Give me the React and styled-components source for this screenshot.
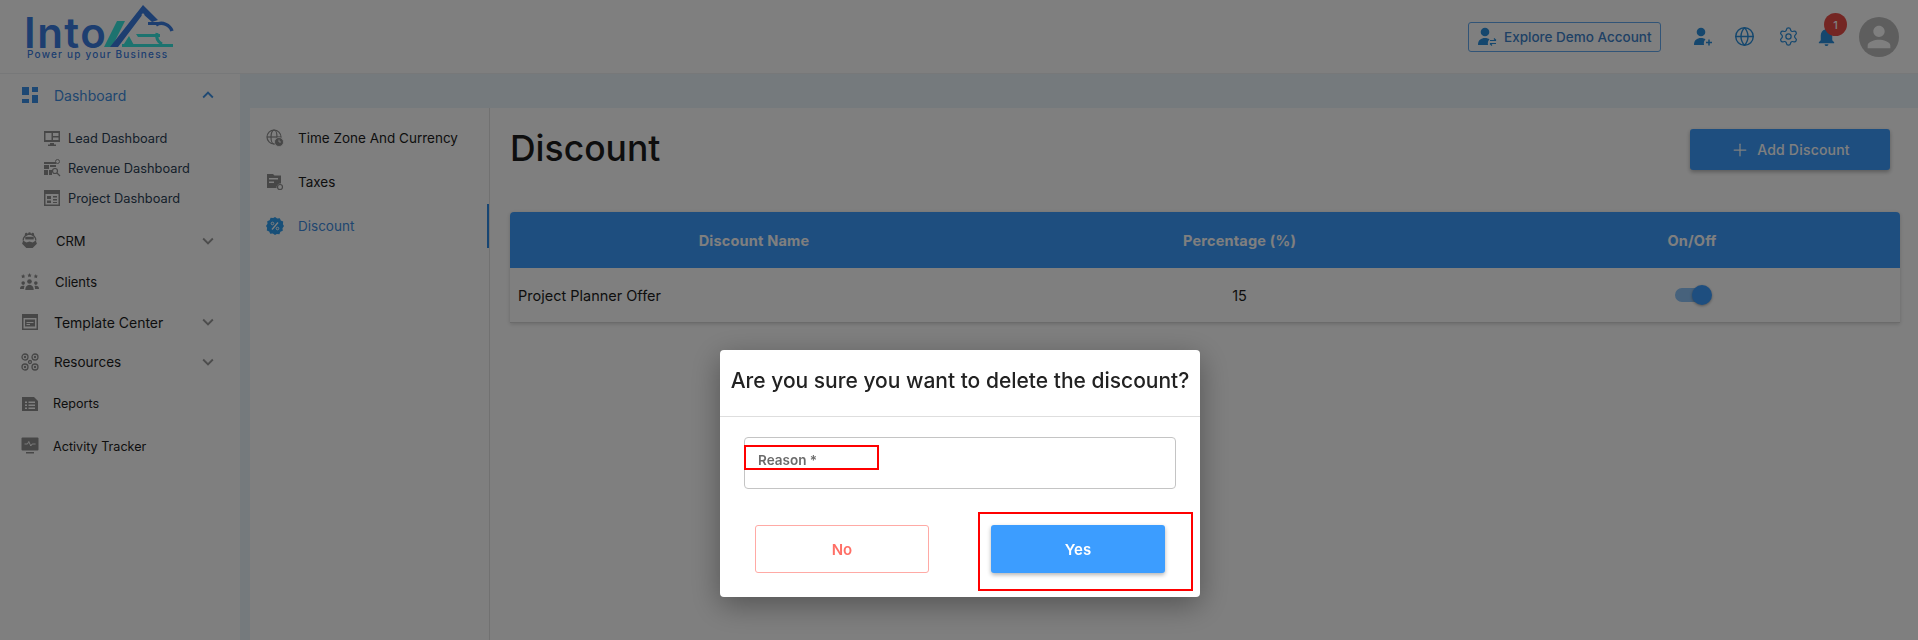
import React from "react";
import styled, { createGlobalStyle } from "styled-components";
import { MdKeyboardArrowDown, MdKeyboardArrowUp, MdPerson, MdNotifications } from "react-icons/md";
import { Globe, Settings, Plus } from "lucide-react";

const GlobalStyle = createGlobalStyle`
  * { box-sizing: border-box; }
  html, body { margin: 0; height: 100%; }
  body {
    font-family: "Inter", "Open Sans", sans-serif;
    color: #1d1d1d;
    background: #fff;
    overflow: hidden;
  }
`;

const Page = styled.div`
  width: 1918px;
  height: 640px;
  display: flex;
  flex-direction: column;
  overflow: hidden;
`;

const Header = styled.header`
  height: 74px;
  flex: none;
  display: flex;
  align-items: center;
  padding: 0 19px 0 27px;
  border-bottom: 1px solid #eef0f2;
`;

const Logo = styled.div`
  position: relative;
  align-self: flex-start;
  margin-top: 4px;
  width: 150px;
  height: 60px;
`;

const LogoWord = styled.span`
  position: absolute;
  left: -3px;
  top: 14px;
  font-size: 42px;
  line-height: 30px;
  font-weight: 600;
  letter-spacing: 1.5px;
  color: #3a7ce0;
`;

const LogoSlogan = styled.span`
  position: absolute;
  left: 0;
  top: 45px;
  font-size: 10px;
  line-height: 11px;
  font-weight: 500;
  letter-spacing: 1.2px;
  white-space: nowrap;
  color: #3a7ce0;
`;

const LogoMark = styled.svg`
  position: absolute;
  left: 77px;
  top: 1px;
`;

const HeaderRight = styled.div`
  margin-left: auto;
  display: flex;
  align-items: center;
`;

const DemoButton = styled.div`
  width: 193px;
  height: 30px;
  display: flex;
  align-items: center;
  gap: 7px;
  padding-left: 8px;
  border: 1px solid #62a9ee;
  border-radius: 3px;
  color: #3c82cb;
  font-size: 13.5px;
  font-weight: 500;
  white-space: nowrap;
  margin-right: 31px;
`;

const HeaderIcon = styled.span`
  display: flex;
  width: ${(p) => p.$w}px;
  justify-content: center;
  color: #2a8fdc;
`;

const Bell = styled(HeaderIcon)`
  position: relative;
`;

const Badge = styled.span`
  position: absolute;
  left: 22px;
  top: -12px;
  width: 23px;
  height: 23px;
  border-radius: 50%;
  background: #e84c47;
  color: #fff;
  font-size: 11px;
  font-weight: 500;
  display: flex;
  align-items: center;
  justify-content: center;
`;

const Avatar = styled.div`
  width: 40px;
  height: 40px;
  border-radius: 50%;
  background: #bdbdbd;
  color: #fff;
  display: flex;
  align-items: center;
  justify-content: center;
  margin-left: 9px;
`;

const Body = styled.div`
  flex: 1;
  display: flex;
  min-height: 0;
`;

const Sidebar = styled.nav`
  width: 240px;
  flex: none;
`;

const NavRow = styled.div`
  height: ${(p) => p.$h}px;
  display: flex;
  align-items: center;
  padding-left: 20px;
  padding-right: 21px;
  font-size: ${(p) => p.$fs || 14}px;
  color: ${(p) => (p.$active ? "#3f8de0" : "#1c1c1c")};
`;

const NavIcon = styled.span`
  width: 19px;
  display: flex;
  justify-content: center;
  margin-right: ${(p) => p.$gap}px;
`;

const Chevron = styled.span`
  margin-left: auto;
  display: flex;
  color: ${(p) => (p.$active ? "#3f93e6" : "#9a9a9a")};
`;

const SubList = styled.div`
  padding: 7px 0 7px 43px;
`;

const SubRow = styled.div`
  height: 30px;
  display: flex;
  align-items: center;
  gap: 7px;
  font-size: 12.8px;
  color: #2b3f55;
`;

const Main = styled.main`
  flex: 1;
  display: flex;
  flex-direction: column;
  background: #eaf5fb;
  padding-top: 34px;
  padding-left: 10px;
`;

const Card = styled.div`
  flex: 1;
  display: flex;
  background: #fff;
`;

const SettingsNav = styled.div`
  width: 240px;
  flex: none;
  border-right: 1px solid #e3e3e3;
  padding-top: 8px;
`;

const SettingsRow = styled.div`
  position: relative;
  height: 44px;
  display: flex;
  align-items: center;
  gap: 14px;
  padding-left: 16px;
  font-size: 13.5px;
  color: ${(p) => (p.$active ? "#3f8de0" : "#1c1c1c")};

  ${(p) =>
    p.$active &&
    `&::after {
      content: "";
      position: absolute;
      right: 0;
      top: 0;
      width: 2px;
      height: 44px;
      background: #2d8ae6;
    }`}
`;

const Content = styled.div`
  flex: 1;
  padding: 21px 18px 0 20px;
`;

const TitleRow = styled.div`
  display: flex;
  align-items: flex-start;
  justify-content: space-between;
  height: 83px;
  padding-right: 10px;
`;

const Title = styled.h1`
  margin: 0;
  font-size: 35.5px;
  line-height: 40px;
  font-weight: 500;
  color: #1c1c1c;
`;

const AddButton = styled.div`
  width: 200px;
  height: 41px;
  border-radius: 3px;
  background: #3c9dff;
  box-shadow: 0 2px 4px rgba(0, 0, 0, 0.3);
  color: #fff;
  display: flex;
  align-items: center;
  justify-content: center;
  gap: 7px;
  font-size: 14px;
  font-weight: 500;
  letter-spacing: 0.2px;
`;

const Table = styled.div`
  border-radius: 4px 4px 0 0;
  box-shadow: 0 1px 4px rgba(0, 0, 0, 0.18);
`;

const TableHead = styled.div`
  height: 56px;
  display: grid;
  grid-template-columns: 488px 483px 1fr;
  align-items: center;
  background: #3c9dff;
  border-radius: 4px 4px 0 0;
  color: #fff;
  font-size: 14.5px;
  font-weight: 700;
  letter-spacing: 0.2px;
  text-align: center;
`;

const TableRow = styled.div`
  height: 55px;
  display: grid;
  grid-template-columns: 488px 483px 1fr;
  align-items: center;
  font-size: 14.5px;
  border-bottom: 1px solid #d6d6d6;
`;

const NameCell = styled.div`
  padding-left: 8px;
`;

const CenterCell = styled.div`
  display: flex;
  justify-content: center;
`;

const LastHeadCell = styled.div`
  padding-left: 3px;
`;

const LastCell = styled(CenterCell)`
  padding-left: 3px;
`;

const SwitchTrack = styled.div`
  position: relative;
  width: 34px;
  height: 14px;
  border-radius: 7px;
  background: #8ec4f8;
`;

const SwitchThumb = styled.div`
  position: absolute;
  right: -3px;
  top: -3px;
  width: 20px;
  height: 20px;
  border-radius: 50%;
  background: #3c9dff;
  box-shadow: 0 1px 3px rgba(0, 0, 0, 0.35);
`;

const Backdrop = styled.div`
  position: fixed;
  inset: 0;
  background: rgba(0, 0, 0, 0.5);
  display: flex;
  align-items: flex-start;
  justify-content: center;
  padding: 350px 0 0 2px;
`;

const Dialog = styled.div`
  width: 480px;
  height: 247px;
  background: #fff;
  border-radius: 4px;
  box-shadow: 0 8px 30px rgba(0, 0, 0, 0.35);
`;

const DialogTitle = styled.div`
  height: 67px;
  padding-bottom: 6px;
  display: flex;
  align-items: center;
  justify-content: center;
  border-bottom: 1px solid #dedede;
  font-size: 21px;
  font-weight: 500;
  color: #222;
  white-space: nowrap;
`;

const DialogBody = styled.div`
  padding: 20px 24px 0;
`;

const ReasonField = styled.div`
  position: relative;
  height: 52px;
  border: 1px solid #c4c4c4;
  border-radius: 4px;
`;

const ReasonLabel = styled.span`
  position: absolute;
  left: 13px;
  top: 14px;
  font-size: 13.5px;
  line-height: 16px;
  font-weight: 600;
  color: #6b6b6b;
`;

const Highlight = styled.div`
  position: absolute;
  border: 2px solid #ff0000;
  pointer-events: none;
`;

const LabelHighlight = styled(Highlight)`
  left: -1px;
  top: 7px;
  width: 135px;
  height: 25px;
`;

const Actions = styled.div`
  position: relative;
  display: flex;
  justify-content: space-between;
  padding: 36px 11px 0;
`;

const ActionButton = styled.div`
  width: 174px;
  height: 48px;
  border-radius: 3px;
  display: flex;
  align-items: center;
  justify-content: center;
  font-size: 15px;
  font-weight: 600;
  color: ${(p) => (p.$primary ? "#fff" : "#ff6f66")};
  background: ${(p) => (p.$primary ? "#3c9dff" : "#fff")};
  border: ${(p) => (p.$primary ? "none" : "1px solid #ffaaa5")};
  box-shadow: ${(p) => (p.$primary ? "0 2px 4px rgba(0,0,0,.3)" : "none")};
`;

const YesHighlight = styled(Highlight)`
  right: -17px;
  top: 23px;
  width: 215px;
  height: 79px;
`;

// the app's own icons, redrawn by hand
const GREY = "#8e8e8e";

const Glyph = ({ size = 18, children }) => (
  <svg width={size} height={size} viewBox="0 0 18 18" fill={GREY}>
    {children}
  </svg>
);

const DashboardGlyph = () => (
  <svg width="16" height="16" viewBox="0 0 16 16" fill="#3a90e8">
    <rect x="0" y="0" width="7" height="8" />
    <rect x="10" y="0" width="6" height="5" />
    <rect x="0" y="12" width="7" height="4" />
    <rect x="10" y="8" width="6" height="8" />
  </svg>
);

const LeadGlyph = () => (
  <Glyph>
    <path d="M1 2h16v11H1zM2.500 4v7h6V4zM10 4v3h5.500V4zM10 8.500V11h5.500V8.500z" fillRule="evenodd" />
    <path d="M7 14h4v1.500h2V17H5v-1.500h2z" />
  </Glyph>
);

const RevenueGlyph = () => (
  <Glyph>
    <path d="M1 3h12v2H1zM1 6h5v4H1zM7 6h6v2H7zM1 11h4v5H1zM6 11h3v5H6z" />
    <circle cx="14.500" cy="2.500" r="2" fill="none" stroke={GREY} />
    <circle cx="12" cy="12" r="2.500" fill="none" stroke={GREY} strokeWidth="1.200" />
    <path d="M14 14l3 3" stroke={GREY} strokeWidth="1.300" />
  </Glyph>
);

const ProjectGlyph = () => (
  <Glyph>
    <path d="M1 1h16v16H1zM2.500 5v10.500h13V5z" fillRule="evenodd" />
    <path d="M4 7h4v3H4zM10 7h4v1.500h-4zM10 10h4v1.500h-4zM4 11.500h4V14H4zM10 13h4v1h-4z" />
  </Glyph>
);

const CrmGlyph = () => (
  <Glyph size={19}>
    <path d="M3 9a6 6 0 0 1 12 0" fill="none" stroke={GREY} strokeWidth="1.200" />
    <circle cx="6" cy="3" r="1.300" />
    <circle cx="9" cy="2.500" r="1.300" />
    <circle cx="12" cy="3" r="1.300" />
    <path d="M5 5.500h8V8H5z" />
    <path d="M3 9l3 2 3-1 3 1 3-2 1 3-4 4H6l-4-4z" />
  </Glyph>
);

const Star = ({ x, y }) => (
  <path transform={`translate(${x} ${y})`} d="M0-2l.6 1.400 1.400.1-1 1 .3 1.500L0 1.200-1.300 2-1 .5l-1-1 1.400-.1z" />
);

const ClientsGlyph = () => (
  <Glyph size={19}>
    <Star x={3} y={4} />
    <Star x={9} y={3} />
    <Star x={15} y={4} />
    <circle cx="9" cy="9" r="2.200" />
    <circle cx="3" cy="10.500" r="1.700" />
    <circle cx="15" cy="10.500" r="1.700" />
    <path d="M5 17c0-3 1.500-5 4-5s4 2 4 5zM0 16c0-2 1-3 3-3 .5 0 1 .1 1.300.3C4 14 3.700 15 3.700 16zM18 16c0-2-1-3-3-3-.5 0-1 .1-1.300.3.3.7.6 1.700.6 2.700z" />
  </Glyph>
);

const TemplateGlyph = () => (
  <Glyph>
    <path d="M1 1h16v16H1zM2.500 5v10.500h13V5z" fillRule="evenodd" />
    <path d="M4 6.500h10v7H4zM5.500 9v1h7V9zM5.500 11v1H9v-1z" fillRule="evenodd" />
  </Glyph>
);

const ResourcesGlyph = () => (
  <Glyph>
    <g fill="none" stroke={GREY} strokeWidth="1.300">
      <circle cx="4" cy="4" r="3" />
      <circle cx="14" cy="4" r="3" />
      <circle cx="4" cy="14" r="3" />
      <circle cx="14" cy="14" r="3" />
      <circle cx="9" cy="9" r="1.500" />
    </g>
    <circle cx="4" cy="4" r="1.200" />
    <circle cx="14" cy="4" r="1.200" />
    <circle cx="4" cy="14" r="1.200" />
    <circle cx="14" cy="14" r="1.200" />
  </Glyph>
);

const ReportsGlyph = () => (
  <Glyph>
    <path
      d="M1 2h12l4 4v10H1zM4 6.500v1.500h2V6.500zM7.500 6.500v1.500H14V6.500zM4 9.500v1.500h2V9.500zM7.500 9.500v1.500H14V9.500zM4 12.500V14h2v-1.500zM7.500 12.500V14H14v-1.500z"
      fillRule="evenodd"
    />
  </Glyph>
);

const ActivityGlyph = () => (
  <Glyph>
    <rect x="0.500" y="0.500" width="17" height="13" rx="1" />
    <path d="M3.500 7h3l1.300-2.500 2 4.500 1.300-2h3.500" fill="none" stroke="#fff" strokeWidth="0.900" />
    <rect x="5" y="15" width="8" height="1.500" />
  </Glyph>
);

const TimeZoneGlyph = () => (
  <Glyph>
    <g fill="none" stroke={GREY} strokeWidth="1.200">
      <circle cx="8" cy="8" r="7" />
      <ellipse cx="8" cy="8" rx="3" ry="7" />
      <path d="M1 8h14" />
    </g>
    <circle cx="13" cy="13" r="4.500" stroke="#fff" strokeWidth="0.800" />
    <path d="M13 10.500V13h2" fill="none" stroke="#fff" strokeWidth="0.900" />
  </Glyph>
);

const TaxesGlyph = () => (
  <Glyph>
    <path d="M1 1h6l1.500 1.500H15V10.500a4 4 0 0 0-4.500 4.500H1zM3 5v1.500h9V5zM3 8.500V10h5V8.500z" fillRule="evenodd" />
    <circle cx="14" cy="14" r="2.500" fill="none" stroke={GREY} strokeWidth="1.200" />
  </Glyph>
);

const DiscountGlyph = () => (
  <svg width="18" height="18" viewBox="0 0 18 18">
    <path
      fill="#2f9ff0"
      d="M9 0l2.200 1.500 2.600-.3 1 2.400 2.400 1-.3 2.600L18 9l-1.500 2.200.3 2.600-2.400 1-1 2.400-2.600-.3L9 18l-2.200-1.500-2.600.3-1-2.400-2.400-1 .3-2.600L0 9l1.500-2.200-.3-2.600 2.400-1 1-2.400 2.600.3z"
    />
    <path stroke="#fff" strokeWidth="1.300" d="M12 5.500l-6 7" />
    <circle cx="6.500" cy="6.500" r="1.300" fill="none" stroke="#fff" />
    <circle cx="11.500" cy="11.500" r="1.300" fill="none" stroke="#fff" />
  </svg>
);

const UserGlyph = ({ color = "#2a8fdc", swap }) => (
  <svg width="20" height="20" viewBox="0 0 20 20" fill={color}>
    <circle cx="8" cy="5" r="4.300" />
    <path d="M1 18c0-5 3-7 7-7 2 0 3.500.5 4.500 1.500-1.500 1-2 3-1.500 5.500z" />
    {swap ? (
      <path stroke={color} strokeWidth="1.200" fill="none" d="M13 13.500h6M17 11.500l2 2M19 16.500h-6M15 18.500l-2-2" />
    ) : (
      <path stroke={color} strokeWidth="1.500" fill="none" d="M16 12.500v6M13 15.500h6" />
    )}
  </svg>
);

const BLUE = "#3a7ce0";
const TEAL = "#38e6de";

const App = () => {
  return (
    <>
      <GlobalStyle />
      <Page>
        <Header>
          <Logo>
            <LogoWord>Into</LogoWord>
            <LogoMark width="72" height="46" viewBox="0 0 72 46">
              <path fill={TEAL} d="M0 42L13 16h8L8 42z" />
              <path fill={TEAL} d="M18 42l7-11 6 11z" />
              <path fill={BLUE} d="M6 42L39 0l15 15-6 2-9-8-25 33z" />
              <circle cx="39" cy="10" r="1.400" fill="#fff" />
              <rect x="44" y="17" width="12" height="3" fill={BLUE} />
              <path fill={TEAL} d="M32 29h24v3H34z" />
              <path fill={TEAL} d="M18 39h51v3H18z" />
              <path fill="none" stroke={BLUE} strokeWidth="3.500" d="M68 26c-2-6-10-10-16-6" />
              <path fill="none" stroke={TEAL} strokeWidth="3" d="M53 28c-1 5 1 9 5 11" />
            </LogoMark>
            <LogoSlogan>Power up your Business</LogoSlogan>
          </Logo>
          <HeaderRight>
            <DemoButton>
              <UserGlyph swap />
              Explore Demo Account
            </DemoButton>
            <HeaderIcon $w={22}>
              <UserGlyph />
            </HeaderIcon>
            <HeaderIcon $w={60}>
              <Globe size={21} strokeWidth={1.6} />
            </HeaderIcon>
            <HeaderIcon $w={28}>
              <Settings size={21} strokeWidth={1.4} />
            </HeaderIcon>
            <Bell $w={48}>
              <MdNotifications size={23} />
              <Badge>1</Badge>
            </Bell>
            <Avatar>
              <MdPerson size={34} />
            </Avatar>
          </HeaderRight>
        </Header>
        <Body>
          <Sidebar>
            <NavRow $h={42} $active>
              <NavIcon $gap={15}>
                <DashboardGlyph />
              </NavIcon>
              Dashboard
              <Chevron $active>
                <MdKeyboardArrowUp size={22} />
              </Chevron>
            </NavRow>
            <SubList>
              <SubRow>
                <LeadGlyph />
                Lead Dashboard
              </SubRow>
              <SubRow>
                <RevenueGlyph />
                Revenue Dashboard
              </SubRow>
              <SubRow>
                <ProjectGlyph />
                Project Dashboard
              </SubRow>
            </SubList>
            <NavRow $h={41} $fs={13}>
              <NavIcon $gap={17}>
                <CrmGlyph />
              </NavIcon>
              CRM
              <Chevron>
                <MdKeyboardArrowDown size={22} />
              </Chevron>
            </NavRow>
            <NavRow $h={41} $fs={13}>
              <NavIcon $gap={16}>
                <ClientsGlyph />
              </NavIcon>
              Clients
            </NavRow>
            <NavRow $h={40}>
              <NavIcon $gap={15}>
                <TemplateGlyph />
              </NavIcon>
              Template Center
              <Chevron>
                <MdKeyboardArrowDown size={22} />
              </Chevron>
            </NavRow>
            <NavRow $h={40} $fs={13.5}>
              <NavIcon $gap={15}>
                <ResourcesGlyph />
              </NavIcon>
              Resources
              <Chevron>
                <MdKeyboardArrowDown size={22} />
              </Chevron>
            </NavRow>
            <NavRow $h={43} $fs={12.6}>
              <NavIcon $gap={14}>
                <ReportsGlyph />
              </NavIcon>
              Reports
            </NavRow>
            <NavRow $h={42} $fs={12.6}>
              <NavIcon $gap={14}>
                <ActivityGlyph />
              </NavIcon>
              Activity Tracker
            </NavRow>
          </Sidebar>
          <Main>
            <Card>
              <SettingsNav>
                <SettingsRow>
                  <TimeZoneGlyph />
                  Time Zone And Currency
                </SettingsRow>
                <SettingsRow>
                  <TaxesGlyph />
                  Taxes
                </SettingsRow>
                <SettingsRow $active>
                  <DiscountGlyph />
                  Discount
                </SettingsRow>
              </SettingsNav>
              <Content>
                <TitleRow>
                  <Title>Discount</Title>
                  <AddButton>
                    <Plus size={20} strokeWidth={1.5} />
                    Add Discount
                  </AddButton>
                </TitleRow>
                <Table>
                  <TableHead>
                    <div>Discount Name</div>
                    <div>Percentage (%)</div>
                    <LastHeadCell>On/Off</LastHeadCell>
                  </TableHead>
                  <TableRow>
                    <NameCell>Project Planner Offer</NameCell>
                    <CenterCell>15</CenterCell>
                    <LastCell>
                      <SwitchTrack>
                        <SwitchThumb />
                      </SwitchTrack>
                    </LastCell>
                  </TableRow>
                </Table>
              </Content>
            </Card>
          </Main>
        </Body>
        <Backdrop>
          <Dialog>
            <DialogTitle>Are you sure you want to delete the discount?</DialogTitle>
            <DialogBody>
              <ReasonField>
                <ReasonLabel>Reason *</ReasonLabel>
                <LabelHighlight />
              </ReasonField>
              <Actions>
                <ActionButton>No</ActionButton>
                <ActionButton $primary>Yes</ActionButton>
                <YesHighlight />
              </Actions>
            </DialogBody>
          </Dialog>
        </Backdrop>
      </Page>
    </>
  );
};

export default App;
